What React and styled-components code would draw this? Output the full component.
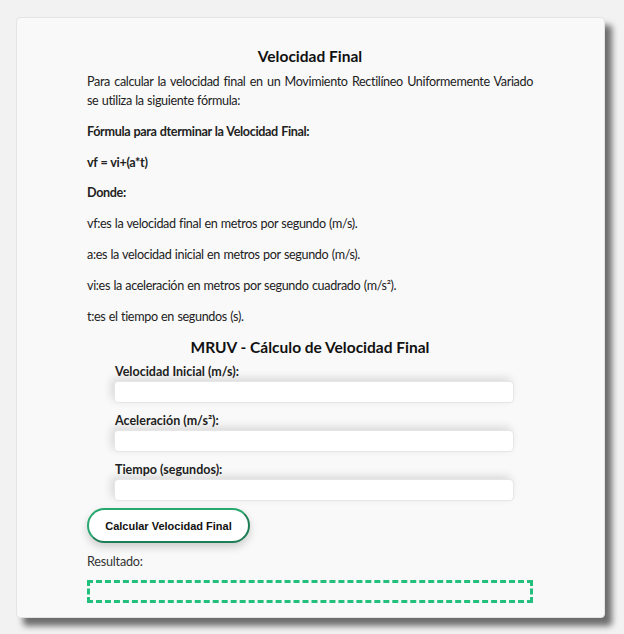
import React from "react";
import styled, { createGlobalStyle } from "styled-components";

const Global = createGlobalStyle`
  html, body { margin: 0; padding: 0; }
  body {
    background: #f2f2f2;
    font-family: Lato, "Noto Sans", sans-serif;
    color: #222;
  }
`;

const Page = styled.div`
  padding: 17px 20px 18px 16px;
`;

const Card = styled.div`
  width: 446px;
  background: #f9f9f9;
  border: 1px solid #e4e4e4;
  border-radius: 4px;
  box-shadow: 7px 8px 6px rgba(0, 0, 0, 0.55);
  padding: 28px 71px 14px 70px;
`;

const Title = styled.h2`
  margin: 0 0 6px;
  text-align: center;
  font-size: 15.5px;
  font-weight: 700;
  color: #111;
  line-height: 20px;
`;

const Para = styled.p`
  margin: 0 0 11.8px;
  font-size: 12.6px;
  letter-spacing: -0.35px;
  word-spacing: 0.5px;
  line-height: 19px;
  text-align: justify;
  color: #222;
  font-weight: ${(p) => (p.$bold ? 700 : 400)};
`;

const SubTitle = styled.h3`
  margin: 11px 0 7px;
  text-align: center;
  font-size: 15.5px;
  font-weight: 700;
  color: #111;
  line-height: 20px;
`;

const Fields = styled.div`
  display: flex;
  flex-direction: column;
  padding-left: 27px;
  width: 400px;
`;

const Label = styled.label`
  font-size: 12.5px;
  font-weight: 700;
  color: #222;
  line-height: 16px;
  margin: 0 0 1px 1px;
`;

const Input = styled.input`
  box-sizing: border-box;
  height: 22px;
  width: 400px;
  border: 1px solid #e6e6e6;
  border-radius: 4px;
  background: #fff;
  box-shadow: -3px -3px 8px rgba(0, 0, 0, 0.13);
  margin-bottom: 10px;
  font-family: inherit;
  outline: none;
`;

const Button = styled.button`
  margin-top: -3px;
  width: 163px;
  height: 35px;
  border-radius: 18px;
  border: 2px solid #27a86f;
  border-right-color: #1d7d54;
  border-bottom-color: #1d7d54;
  background: #fff;
  box-shadow: 0 4px 8px rgba(0, 0, 0, 0.18);
  font-family: "Liberation Sans", Arial, sans-serif;
  font-weight: 700;
  font-size: 11px;
  color: #111;
  cursor: pointer;
`;

const ResultLabel = styled.div`
  margin-top: 10px;
  font-size: 12.6px;
  letter-spacing: -0.2px;
  line-height: 17px;
  color: #333;
`;

const ResultBox = styled.div`
  box-sizing: border-box;
  margin-top: 10px;
  width: 446px;
  height: 23px;
  border: 3px dashed #22c07c;
`;

export default function App() {
  return (
    <>
      <Global />
      <Page>
        <Card>
          <Title>Velocidad Final</Title>
          <Para>
            Para calcular la velocidad final en un Movimiento Rectilíneo Uniformemente Variado se utiliza la siguiente fórmula:
          </Para>
          <Para $bold>Fórmula para dterminar la Velocidad Final:</Para>
          <Para $bold>vf = vi+(a*t)</Para>
          <Para $bold>Donde:</Para>
          <Para>vf:es la velocidad final en metros por segundo (m/s).</Para>
          <Para>a:es la velocidad inicial en metros por segundo (m/s).</Para>
          <Para>vi:es la aceleración en metros por segundo cuadrado (m/s²).</Para>
          <Para>t:es el tiempo en segundos (s).</Para>
          <SubTitle>MRUV - Cálculo de Velocidad Final</SubTitle>
          <Fields>
            <Label>Velocidad Inicial (m/s):</Label>
            <Input type="text" />
            <Label>Aceleración (m/s²):</Label>
            <Input type="text" />
            <Label>Tiempo (segundos):</Label>
            <Input type="text" />
          </Fields>
          <Button>Calcular Velocidad Final</Button>
          <ResultLabel>Resultado:</ResultLabel>
          <ResultBox />
        </Card>
      </Page>
    </>
  );
}
